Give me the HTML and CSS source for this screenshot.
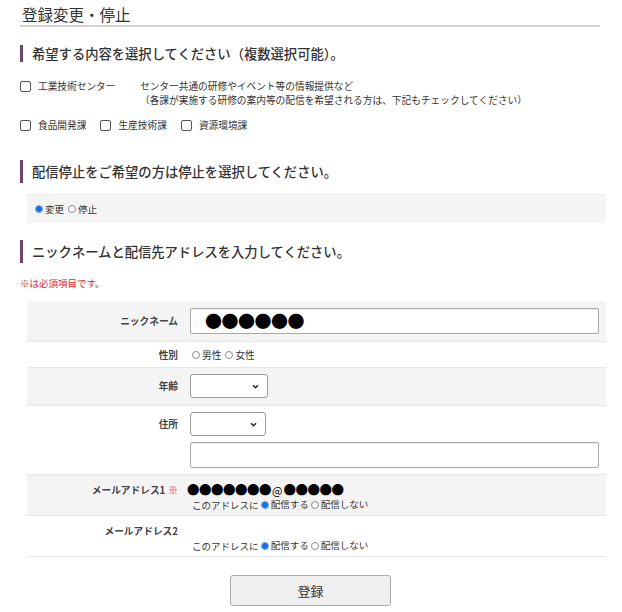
FILE: index.html
```html
<!DOCTYPE html>
<html lang="ja">
<head>
<meta charset="utf-8">
<title>登録変更・停止</title>
<link rel="stylesheet" href="styles.css">
</head>
<body>
<div class="page">
  <h1 class="title">登録変更・停止</h1>

  <h2 class="sec sec-first">希望する内容を選択してください（複数選択可能）。</h2>
  <div class="opt-row">
    <label class="chk chk-wide"><span class="box"></span>工業技術センター</label>
    <div class="desc">
      <div>センター共通の研修やイベント等の情報提供など</div>
      <div>（各課が実施する研修の案内等の配信を希望される方は、下記もチェックしてください）</div>
    </div>
  </div>
  <div class="opt-row opt-row2">
    <label class="chk"><span class="box"></span>食品開発課</label>
    <label class="chk"><span class="box"></span>生産技術課</label>
    <label class="chk"><span class="box"></span>資源環境課</label>
  </div>

  <h2 class="sec sec-tall">配信停止をご希望の方は停止を選択してください。</h2>
  <div class="band">
    <label class="rad"><span class="dot on"></span>変更</label>
    <label class="rad"><span class="dot"></span>停止</label>
  </div>

  <h2 class="sec sec-tall sec-third">ニックネームと配信先アドレスを入力してください。</h2>
  <p class="note">※は必須項目です。</p>

  <div class="form">
    <div class="row gray r1">
      <div class="lbl mid">ニックネーム</div>
      <div class="val"><div class="input big">●●●●●●</div></div>
    </div>
    <div class="row r2">
      <div class="lbl mid">性別</div>
      <div class="val mid">
        <label class="rad"><span class="dot"></span>男性</label>
        <label class="rad"><span class="dot"></span>女性</label>
      </div>
    </div>
    <div class="row gray r3">
      <div class="lbl mid">年齢</div>
      <div class="val"><div class="select s78"><svg width="7" height="5" viewBox="0 0 8 6"><path d="M1 1.5 L4 4.5 L7 1.5" fill="none" stroke="#222" stroke-width="1.8"/></svg></div></div>
    </div>
    <div class="row r4">
      <div class="lbl top4">住所</div>
      <div class="val stack">
        <div class="select s76"><svg width="7" height="5" viewBox="0 0 8 6"><path d="M1 1.5 L4 4.5 L7 1.5" fill="none" stroke="#222" stroke-width="1.8"/></svg></div>
        <div class="input"></div>
      </div>
    </div>
    <div class="row gray r5">
      <div class="lbl top5">メールアドレス1<span class="req">※</span></div>
      <div class="val">
        <div class="mail">●●●●●●●<span class="at">@</span>●●●●●</div>
        <div class="sub">このアドレスに <label class="rad"><span class="dot on"></span>配信する</label> <label class="rad"><span class="dot"></span>配信しない</label></div>
      </div>
    </div>
    <div class="row r6">
      <div class="lbl top5">メールアドレス2</div>
      <div class="val">
        <div class="mail"></div>
        <div class="sub">このアドレスに <label class="rad"><span class="dot on"></span>配信する</label> <label class="rad"><span class="dot"></span>配信しない</label></div>
      </div>
    </div>
  </div>

  <div class="actions"><button class="btn" type="button">登録</button></div>
</div>
</body>
</html>
```
FILE: styles.css
```css
* { box-sizing: border-box; }
html, body { margin: 0; padding: 0; background: #fff; }
body {
  font-family: "Noto Sans CJK JP", "Noto Sans", sans-serif;
  color: #333;
  font-size: 9.7px;
}
.page { padding: 0 16px 0 20px; width: 622px; }

.title {
  margin: 0 6px 0 0;
  padding: 3px 0 0 2px;
  height: 27px;
  font-size: 15.5px;
  line-height: 22px;
  font-weight: normal;
  color: #333;
  border-bottom: 2px solid #d4d4d4;
}

.sec {
  margin: 0;
  border-left: 3px solid #6e4470;
  padding-left: 9px;
  font-size: 13.3px;
  font-weight: 500;
  color: #333;
  display: flex;
  align-items: center;
}
.sec-first { margin-top: 18px; height: 17px; }
.sec-tall { margin-top: 28px; height: 23px; }
.sec-third { margin-top: 17px; }

.opt-row { display: flex; margin-top: 17px; line-height: 14px; }
.opt-row2 { margin-top: 11px; }
.chk { display: flex; align-items: center; margin-right: 14px; }
.chk-wide { width: 120px; margin-right: 0; align-self: flex-start; }
.box {
  display: inline-block;
  width: 11px; height: 11px;
  border: 1px solid #555;
  border-radius: 2px;
  margin-right: 7px;
  background: #fff;
}
.desc { line-height: 14px; }

.band {
  margin: 11px 0 0 7px;
  width: 579px;
  height: 29px;
  background: #f4f4f4;
  border-top: 1px solid #ececec;
  display: flex;
  align-items: center;
  padding-left: 8px;
  font-size: 9.5px;
}

.rad { display: inline-flex; align-items: center; margin-right: 4px; }
.dot {
  display: inline-block;
  width: 8px; height: 8px;
  border: 1px solid #8a8a8a;
  border-radius: 50%;
  margin-right: 2px;
  background: #fff;
}
.dot.on {
  border-color: #5b9bf0;
  background: radial-gradient(circle, #1a6fe0 0 2.6px, #6aa6f2 3.2px);
}

.note {
  margin: 13px 0 0 0;
  line-height: 14px;
  color: #e0242c;
  font-size: 9.5px;
}

.form { margin: 11px 0 0 7px; width: 579px; }
.row {
  display: grid;
  grid-template-columns: 163px 1fr;
  border-bottom: 1px solid #e8e8e8;
}
.row.gray { background: #f4f4f4; }
.lbl {
  text-align: right;
  padding-right: 12px;
  font-weight: bold;
  color: #444;
}
.lbl.mid, .val.mid { display: flex; align-items: center; justify-content: flex-end; }
.val.mid { justify-content: flex-start; padding-left: 2px; }
.val { padding-right: 7px; }

.r1 { height: 41px; padding: 7px 0; }
.r2 { height: 26px; }
.r3 { height: 38px; padding: 6px 0 7px; }
.r4 { height: 69px; padding: 6px 0 6px; }
.r5 { height: 41px; padding: 7px 0 0; }
.r6 { height: 41px; padding: 7px 0 0; }

.lbl.top4 { padding-top: 5px; line-height: 14px; }
.lbl.top5 { line-height: 16px; }

.input {
  height: 26px;
  border: 1px solid #a8a8a8;
  border-radius: 2px;
  background: #fff;
  box-shadow: inset 0 1px 1px rgba(0,0,0,0.08);
}
.input.big {
  font-size: 17px;
  line-height: 24px;
  padding-left: 14px;
  color: #000;
  letter-spacing: -0.5px;
}
.select {
  height: 24px;
  border: 1px solid #9a9a9a;
  border-radius: 3px;
  background: #fff;
  display: flex;
  align-items: center;
  justify-content: flex-end;
  padding-right: 8px;
}
.s78 { width: 78px; }
.s76 { width: 76px; }
.stack { display: flex; flex-direction: column; gap: 6px; }

.req { color: #e0242c; margin-left: 3px; font-weight: normal; }

.mail {
  height: 16px;
  font-size: 12.5px;
  line-height: 16px;
  color: #000;
  margin-left: -3px;
  letter-spacing: -0.5px;
}
.mail .at { font-size: 11px; letter-spacing: 0; margin: 0 1px; }
.sub { line-height: 13px; padding-left: 2px; font-size: 9.5px; }
.sub .rad { margin-right: 0; }

.actions { margin-top: 18px; padding-left: 210px; }
.btn {
  width: 161px;
  height: 31px;
  border: 1px solid #aaa;
  border-radius: 3px;
  background: #efefef;
  font-family: "Noto Sans CJK JP", sans-serif;
  font-size: 13px;
  color: #333;
  padding: 0;
}
```
